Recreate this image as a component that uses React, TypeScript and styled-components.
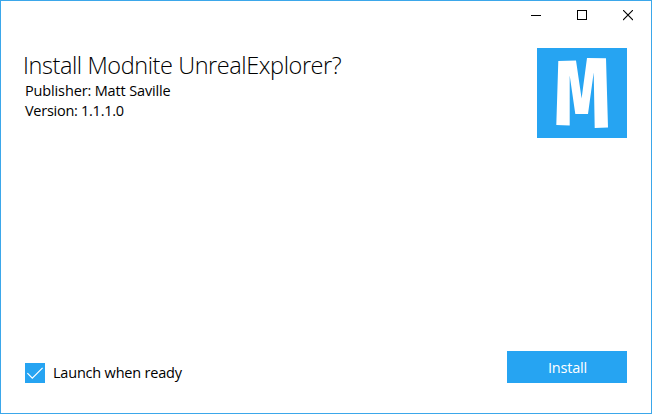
import React from 'react';
import styled, { createGlobalStyle } from 'styled-components';

const accent = '#26a4f2';

const GlobalStyle = createGlobalStyle`
  * { box-sizing: border-box; }
  html, body { margin: 0; padding: 0; background: #fff; }
  body { overflow: hidden; }
`;

const Window = styled.main`
  display: flex;
  flex-direction: column;
  width: 652px;
  height: 414px;
  border: 1px solid #3ba7ea;
  background: #fff;
  color: #000;
  font-family: 'Open Sans', 'Noto Sans', sans-serif;
`;

const TitleBar = styled.header`
  display: flex;
  justify-content: flex-end;
  height: 29px;
  flex: none;
`;

const CaptionButton = styled.button`
  display: grid;
  place-items: center;
  width: 46px;
  height: 29px;
  padding: 0;
  border: 0;
  background: transparent;

  svg { display: block; }
`;

const Content = styled.section`
  display: flex;
  justify-content: space-between;
  align-items: flex-start;
  padding: 18px 24px 0 22px;
`;

const Details = styled.div`
  display: flex;
  flex-direction: column;
  padding-top: 1px;
`;

const Title = styled.h1`
  margin: 0;
  font-size: 23.5px;
  font-weight: 340;
  line-height: 32px;
  letter-spacing: -0.42px;
  white-space: nowrap;
`;

const Text = styled.span<{ $spacing: number }>`
  font-size: 14.5px;
  line-height: 20px;
  letter-spacing: ${(p) => p.$spacing}px;
  white-space: nowrap;
`;

const Meta = styled.div`
  display: flex;
  flex-direction: column;
  padding-left: 2px;
`;

const Logo = styled.svg`
  display: block;
  width: 90px;
  height: 90px;
  background: ${accent};
`;

const Footer = styled.footer`
  display: flex;
  align-items: flex-end;
  justify-content: space-between;
  margin-top: auto;
  padding: 0 24px 30px;
`;

const CheckLabel = styled.label`
  display: flex;
  align-items: center;
  gap: 8px;
`;

const CheckBox = styled.span`
  display: block;
  width: 20px;
  height: 20px;
  background: ${accent};

  svg { display: block; }
`;

const InstallButton = styled.button`
  width: 120px;
  height: 32px;
  padding: 2px 0 0 1px;
  border: 0;
  background: ${accent};
  color: #fff;
  font-family: inherit;
`;

export default function App() {
  return (
    <>
      <GlobalStyle />
      <Window>
        <TitleBar>
          <CaptionButton aria-label="Minimize">
            <svg width="10" height="11" shapeRendering="crispEdges">
              <rect y="5" width="10" height="1" />
            </svg>
          </CaptionButton>
          <CaptionButton aria-label="Maximize">
            <svg width="10" height="11" shapeRendering="crispEdges">
              <rect x="0.5" y="0.5" width="9" height="9" fill="none" stroke="#000" />
            </svg>
          </CaptionButton>
          <CaptionButton aria-label="Close">
            <svg width="10" height="11">
              <path d="M0 0L10 10M10 0L0 10" stroke="#000" strokeWidth="1.1" />
            </svg>
          </CaptionButton>
        </TitleBar>
        <Content>
          <Details>
            <Title>Install Modnite UnrealExplorer?</Title>
            <Meta>
              <Text $spacing={-0.14}>Publisher: Matt Saville</Text>
              <Text $spacing={-0.27}>Version: 1.1.1.0</Text>
            </Meta>
          </Details>
          <Logo viewBox="0 0 90 90" aria-label="Modnite">
            <path
              fill="#fff"
              d="M21.3 13L39 12.5L44.6 50.5L50 10L69 10.3L71 79.5L57.7 80L56.7 24.5L51 66H38.3L32.7 27.5V77.5L19.3 77Z"
            />
          </Logo>
        </Content>
        <Footer>
          <CheckLabel>
            <CheckBox role="checkbox" aria-checked="true">
              <svg width="20" height="20">
                <path d="M2.4 10.2L7.3 15.2L17.6 4.8" fill="none" stroke="#fff" strokeWidth="1.2" />
              </svg>
            </CheckBox>
            <Text $spacing={-0.2}>Launch when ready</Text>
          </CheckLabel>
          <InstallButton>
            <Text $spacing={-0.2}>Install</Text>
          </InstallButton>
        </Footer>
      </Window>
    </>
  );
}
